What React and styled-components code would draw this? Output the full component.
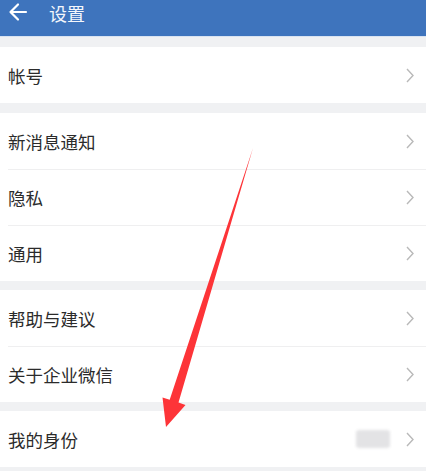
import React from 'react';
import styled, { createGlobalStyle } from 'styled-components';

const GlobalStyle = createGlobalStyle`
  html, body {
    margin: 0;
    padding: 0;
    background: #f0f1f3;
  }
  body {
    font-family: "Noto Sans CJK SC", "Noto Sans", sans-serif;
  }
`;

const Page = styled.div`
  position: relative;
  width: 426px;
  height: 471px;
  overflow: hidden;
  background: #f0f1f3;
`;

const Header = styled.header`
  height: 37px;
  background: #3e74bd;
  display: flex;
  align-items: flex-start;
  padding: 1px 0 0 8px;
  box-sizing: border-box;
  border-bottom: 1px solid #d9e3f1;
  color: #fff;
`;

const Title = styled.h1`
  margin: 0 0 0 21px;
  font-size: 18px;
  font-weight: 400;
  line-height: 24px;
  color: #f4f7fc;
`;

const Group = styled.section`
  background: #fff;
  margin-top: ${(p) => p.gap}px;
`;

const Row = styled.div`
  height: 56px;
  display: flex;
  align-items: center;
  padding: 0 12px 0 8px;
  box-sizing: border-box;
  position: relative;
  &::before {
    content: '';
    display: ${(p) => (p.first ? 'none' : 'block')};
    position: absolute;
    top: 0;
    left: 8px;
    right: 0;
    height: 1px;
    background: #efeff0;
  }
`;

const Label = styled.span`
  flex: 1;
  font-size: 17.5px;
  color: #2b2b2b;
  line-height: 1;
  padding-top: 2px;
`;

const Blurred = styled.div`
  width: 34px;
  height: 18px;
  margin-right: 16px;
  background: #e3e3e5;
  filter: blur(1.5px);
  border-radius: 3px;
`;

const Arrow = styled.svg`
  position: absolute;
  left: 0;
  top: 0;
  pointer-events: none;
`;

const BackIcon = () => (
  <svg width="20" height="22" viewBox="0 0 20 22">
    <path d="M18 11H3M10 3.5L2.5 11L10 18.5" fill="none" stroke="#fff" strokeWidth="2.2" strokeLinecap="round" strokeLinejoin="round" />
  </svg>
);

const Chevron = () => (
  <svg width="8" height="15" viewBox="0 0 8 15">
    <polyline points="1,1 7,7.5 1,14" fill="none" stroke="#b9b9b9" strokeWidth="1.4" />
  </svg>
);

const groups = [
  { gap: 10, items: ['帐号'] },
  { gap: 10, items: ['新消息通知', '隐私', '通用'] },
  { gap: 9, items: ['帮助与建议', '关于企业微信'] },
  { gap: 9, items: ['我的身份'], blur: true },
];

export default function App() {
  return (
    <Page>
      <GlobalStyle />
      <Header>
        <BackIcon />
        <Title>设置</Title>
      </Header>
      {groups.map((g, gi) => (
        <Group key={gi} gap={g.gap}>
          {g.items.map((item, i) => (
            <Row key={item} first={i === 0}>
              <Label>{item}</Label>
              {g.blur && <Blurred />}
              <Chevron />
            </Row>
          ))}
        </Group>
      ))}
      <Arrow width="426" height="471" viewBox="0 0 426 471">
        <polygon
          points="253,148 178.5,402.5 185.5,405 166,427 162.5,397.4 169.7,399.7"
          fill="#fd3438"
        />
      </Arrow>
    </Page>
  );
}
